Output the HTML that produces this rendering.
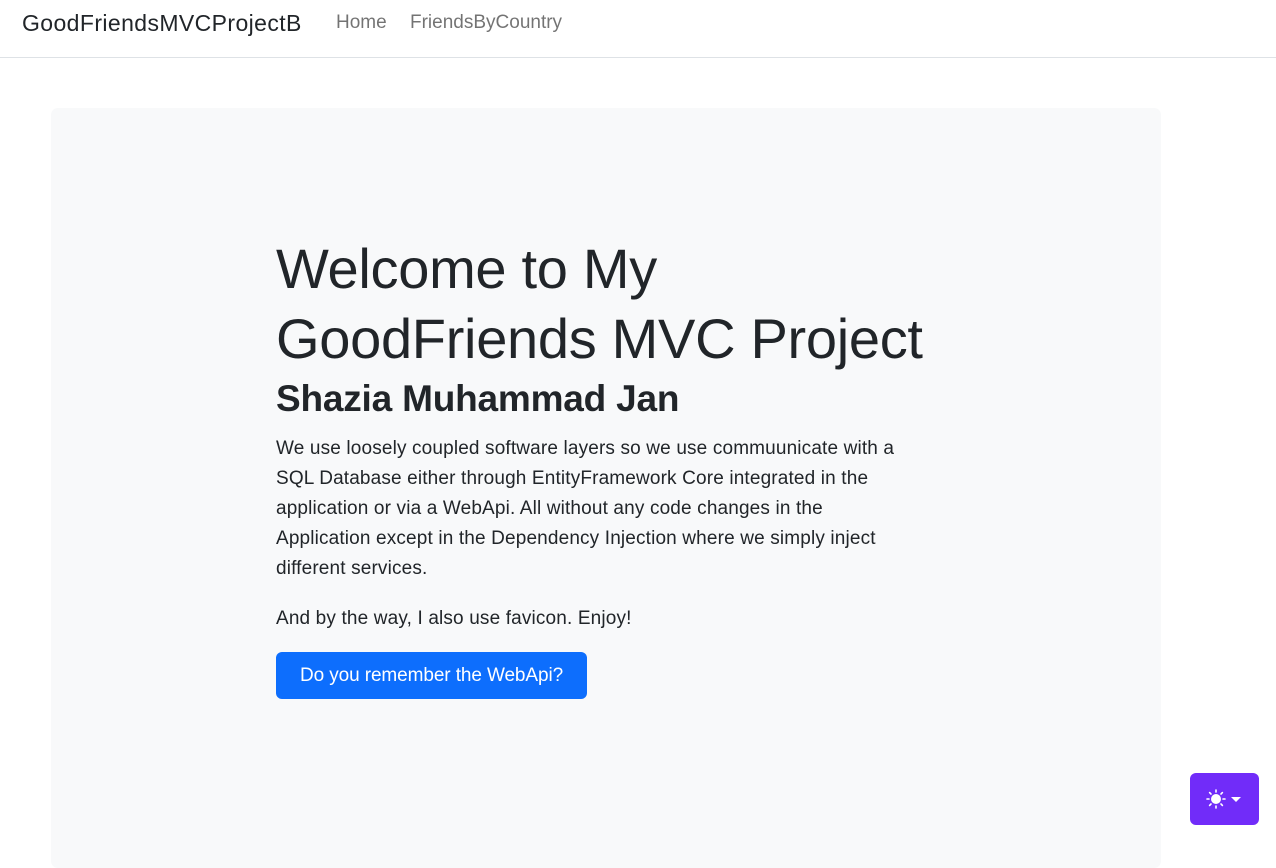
<!DOCTYPE html>
<html><head><meta charset="utf-8"><style>
*{box-sizing:border-box;margin:0;padding:0}
body{width:1276px;height:838px;overflow:hidden;background:#fff;font-family:"Liberation Sans",sans-serif;color:#212529;position:relative}
.nav{height:58px;border-bottom:1px solid #dee2e6;position:relative}
.brand{position:absolute;left:22px;top:10px;font-size:23px;letter-spacing:0.4px;color:#212529}
.l{position:absolute;top:12px;font-size:19px;color:rgba(0,0,0,.55);letter-spacing:0}
.jb{position:absolute;left:51px;top:108px;width:1110px;height:760px;background:#f8f9fa;border-radius:7px}
.c{position:absolute;left:276px;top:234px;white-space:nowrap}
h1{font-size:56px;line-height:70px;letter-spacing:-0.3px;font-weight:normal}
h2{font-weight:bold;font-size:37px;line-height:50px;letter-spacing:-0.2px}
p{font-size:19px;line-height:30px;letter-spacing:0.15px;margin-top:10px}
.btn{display:inline-block;margin-top:18px;background:#0d6efd;color:#fff;border-radius:6px;width:311px;height:47px;line-height:47px;text-align:center;font-size:19px;letter-spacing:-0.1px}
.tb{position:absolute;left:1190px;top:773px;width:69px;height:52px;background:#712cf9;border-radius:6px}
</style></head><body>
<div class="nav"><span class="brand">GoodFriendsMVCProjectB</span><span class="l" style="left:336px">Home</span><span class="l" style="left:410px">FriendsByCountry</span></div>
<div class="jb"></div>
<div class="c">
<h1>Welcome to My<br>GoodFriends MVC Project</h1>
<h2>Shazia Muhammad Jan</h2>
<p>We use loosely coupled software layers so we use commuunicate with a<br>SQL Database either through EntityFramework Core integrated in the<br>application or via a WebApi. All without any code changes in the<br>Application except in the Dependency Injection where we simply inject<br>different services.</p>
<p style="margin-top:20px">And by the way, I also use favicon. Enjoy!</p>
<div class="btn">Do you remember the WebApi?</div>
</div>
<div class="tb"><svg width="69" height="52" viewBox="0 0 69 52"><g stroke="#fff" stroke-width="1.6" stroke-linecap="round"><circle cx="26" cy="26" r="5" fill="#fff" stroke="none"/><path d="M26 17v2M26 33v2M17 26h2M33 26h2M19.6 19.6l1.4 1.4M31 31l1.4 1.4M19.6 32.4l1.4-1.4M31 21l1.4-1.4"/></g><path d="M41 24h10l-5 5z" fill="#fff"/></svg></div>
</body></html>
